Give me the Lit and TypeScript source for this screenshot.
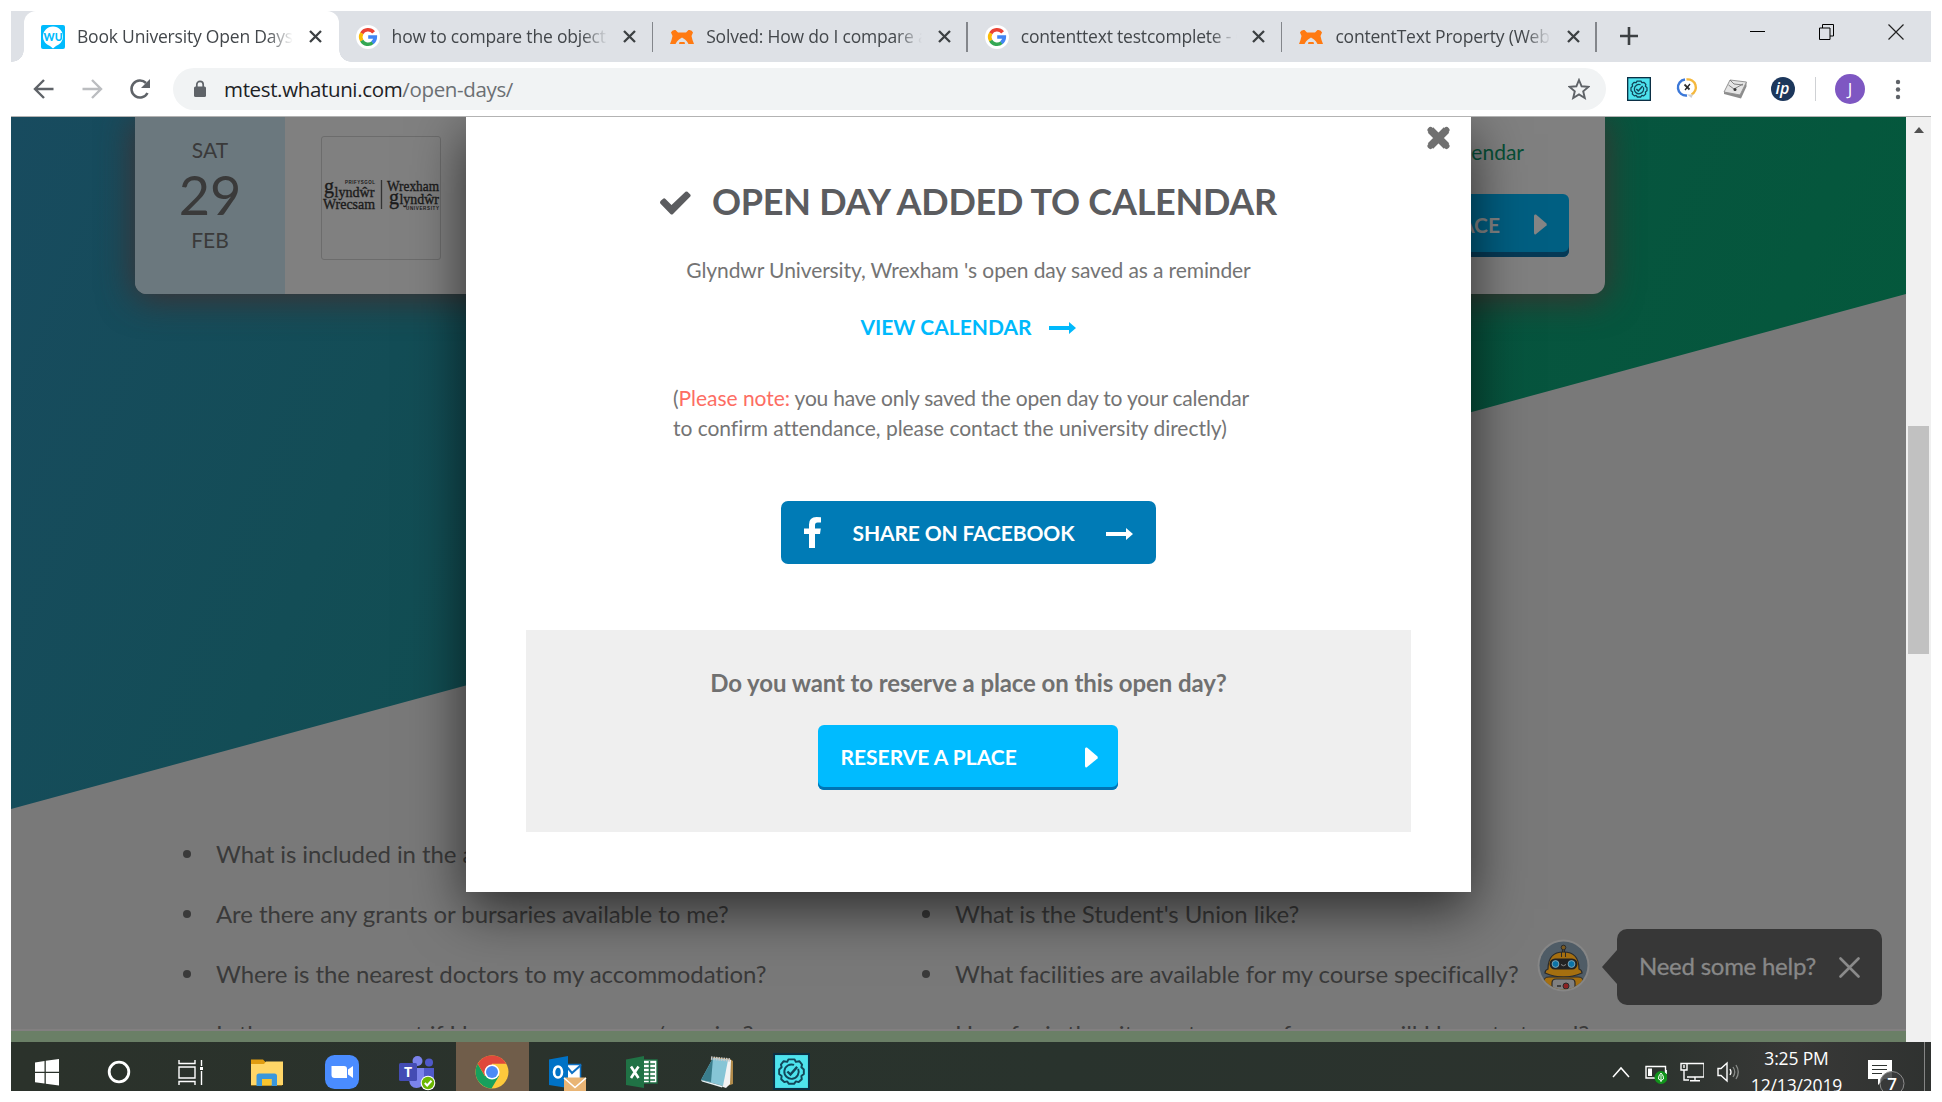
import { LitElement, html, css, svg, nothing } from "lit";
import { customElement, property } from "lit/decorators.js";
import { classMap } from "lit/directives/class-map.js";

const googleIcon = html`<svg width="24" height="24" viewBox="0 0 24 24">
  <circle cx="12" cy="12" r="12" fill="#fff" />
  <g fill="none" stroke-width="3.6">
    <path d="M17.6 7.4A7.3 7.3 0 0 0 5.7 8.4" stroke="#ea4335" />
    <path d="M5.8 8.2A7.3 7.3 0 0 0 5.8 15.8" stroke="#fbbc05" />
    <path d="M5.7 15.6A7.3 7.3 0 0 0 16.8 17.5" stroke="#34a853" />
    <path d="M16.4 17.8A7.3 7.3 0 0 0 19.3 12H12.2" stroke="#4285f4" />
  </g>
</svg>`;

const bearIcon = html`<svg width="24" height="24" viewBox="0 0 24 24">
  <path d="M1 7.500Q2 4.500 5.500 5L8 7.500H16L18.500 5Q22 4.500 23 7.500L21.500 11L22.500 15L24 19H18.500L17 16.500L15 14.500L12 12.500L9 14.500L7 16.500L5.500 19H0L1.500 15L2.500 11Z" fill="#ff7a12" />
  <path d="M9.500 17H14.500L15 19H9Z" fill="#ff7a12" />
</svg>`;

const whatuniIcon = html`<svg width="24" height="24" viewBox="0 0 24 24">
  <rect width="24" height="24" rx="2" fill="#00bbfd" />
  <path d="M12 1.500C17.800 1.500 22 6 22 11.500C22 16 19 19.500 15 21L12 23.500L9 21C5 19.500 2 16 2 11.500C2 6 6.200 1.500 12 1.500Z" fill="#fff" />
  <text x="12" y="15.700" text-anchor="middle" font-family="Lato, sans-serif" font-weight="900" font-size="10.500" fill="#00bbfd">WU</text>
</svg>`;

const gearBadge = (size: number) => html`<svg width=${size} height=${size} viewBox="0 0 36 36">
  <rect x="1" y="1" width="34" height="34" fill="#4ee3ee" stroke="#0b2f45" stroke-width="2" />
  <g fill="none" stroke="#12465a" stroke-width="1.900">
    <path d="M15 6.200H21L22.200 8.600L25.600 8L28.300 11.200L27.600 13.800L30 16V20.500L27.600 22.400L28 25.500L25 28.300L22.300 27.600L20.500 30H15.500L13.700 27.600L11 28.300L8 25.500L8.400 22.400L6 20.500V16L8.400 13.800L7.700 11.200L10.400 8L13.800 8.600Z" stroke-linejoin="round" />
    <path d="M24.500 15.500A7 7 0 1 1 20.500 11.600" />
    <path d="M14 18L17 21L23.500 13.500" stroke-width="2.300" />
  </g>
</svg>`;

const caret = html`<svg width="13" height="21" viewBox="0 0 13 21"><path d="M1 .5Q0 .5 0 2V19Q0 20.500 1.500 20.500L12.500 11.500Q13 10.500 12.500 9.500L2 .5Z" fill="currentColor" /></svg>`;

const arrow = html`<svg width="27" height="12" viewBox="0 0 27 12"><path d="M0 4H20V0L27 6L20 12V8H0Z" fill="currentColor" /></svg>`;

@customElement("browser-tab")
class BrowserTab extends LitElement {
  @property() label = "";
  @property({ type: Boolean }) active = false;
  @property({ attribute: false }) icon: unknown = nothing;

  static styles = css`
    :host { display: block; width: 314.600px; height: 51px; position: relative; }
    .tab { display: flex; align-items: center; height: 100%; box-sizing: border-box; padding-left: 17px; }
    .active { background: #fff; border-radius: 12px 12px 0 0; position: relative; }
    .active::before, .active::after {
      content: ""; position: absolute; bottom: 0; width: 12px; height: 12px;
    }
    .active::before { left: -12px; background: radial-gradient(circle at 0 0, transparent 11.500px, #fff 12px); }
    .active::after { right: -12px; background: radial-gradient(circle at 100% 0, transparent 11.500px, #fff 12px); }
    .icon { width: 24px; height: 24px; flex: none; }
    .icon svg { display: block; }
    .label {
      margin: 0 0 2px 12px; width: 216px; overflow: hidden; white-space: nowrap; flex: none;
      font: 17.500px/26px "Open Sans", "Noto Sans", sans-serif; letter-spacing: -0.200px; color: #43474b;
      -webkit-mask-image: linear-gradient(90deg, #000 88%, transparent 100%);
      mask-image: linear-gradient(90deg, #000 88%, transparent 100%);
    }
    .close { margin: 0 0 1px 15.500px; flex: none; }
    .rule { position: absolute; right: 0; top: 11px; width: 1.500px; height: 30px; background: #83868b; }
  `;

  render() {
    return html`<div class=${classMap({ tab: true, active: this.active })}>
        <span class="icon">${this.icon}</span>
        <span class="label">${this.label}</span>
        <svg class="close" width="13" height="13" viewBox="0 0 13 13"><path d="M1 1L12 12M12 1L1 12" stroke="#3c4043" stroke-width="2.300" /></svg>
      </div>
      ${this.active ? nothing : html`<i class="rule"></i>`}`;
  }
}

@customElement("browser-chrome")
class BrowserChrome extends LitElement {
  static styles = css`
    :host { display: block; background: #fff; }
    .strip { display: flex; height: 51px; background: #dee1e6; padding-left: 13px; }
    .plus { margin: 16px 0 0 23px; width: 18px; height: 18px; }
    .window { margin-left: auto; display: flex; padding: 13px 27px 0 0; gap: 54px; }
    .window svg { display: block; }
    .bar { display: flex; align-items: center; height: 54px; border-bottom: 1px solid #b3b3b3; box-sizing: content-box; }
    .nav { display: flex; gap: 24px; padding-left: 21px; width: 141px; }
    .omni {
      display: flex; align-items: center; width: 1433px; height: 42px; border-radius: 21px;
      background: #f1f3f4; box-sizing: border-box; padding: 0 16px 0 20px;
    }
    .url { font: 20.500px/30px "Open Sans", "Noto Sans", sans-serif; color: #202124; margin-left: 17px; flex: 1; letter-spacing: -0.350px; }
    .path { color: #6b6f73; }
    .ext { display: flex; align-items: center; gap: 24px; margin-left: 21px; }
    .ext svg { display: block; }
    .sep { width: 1px; height: 24px; background: #cfd1d4; margin-left: 20px; }
    .avatar {
      width: 30px; height: 30px; border-radius: 50%; background: #7e57c2; color: #fff; margin-left: 19px;
      font: 17px/30px "Open Sans", sans-serif; text-align: center;
    }
    .menu { margin-left: 30px; }
  `;

  render() {
    return html`
      <div class="strip">
        <browser-tab active label="Book University Open Days" .icon=${whatuniIcon}></browser-tab>
        <browser-tab label="how to compare the object" .icon=${googleIcon}></browser-tab>
        <browser-tab label="Solved: How do I compare a" .icon=${bearIcon}></browser-tab>
        <browser-tab label="contenttext testcomplete - G" .icon=${googleIcon}></browser-tab>
        <browser-tab label="contentText Property (Web O" .icon=${bearIcon}></browser-tab>
        <svg class="plus" viewBox="0 0 18 18"><path d="M9 0V18M0 9H18" stroke="#3c4043" stroke-width="2.600" /></svg>
        <div class="window">
          <svg width="15" height="16" viewBox="0 0 15 16"><path d="M0 7.500H15" stroke="#000" /></svg>
          <svg width="15" height="16" viewBox="0 0 15 16"><path d="M.5 4H11V15.500H.5ZM3.500 4V.5H14.500V12H11" fill="none" stroke="#000" /></svg>
          <svg width="16" height="16" viewBox="0 0 16 16"><path d="M.5 .5L15.500 15.500M15.500 .5L.5 15.500" stroke="#222" stroke-width="1.200" /></svg>
        </div>
      </div>
      <div class="bar">
        <div class="nav">
          <svg width="24" height="24" viewBox="0 0 24 24"><path d="M21.500 12H3.500M12 3L3 12L12 21" fill="none" stroke="#5f6368" stroke-width="2.400" /></svg>
          <svg width="24" height="24" viewBox="0 0 24 24"><path d="M2.500 12H20.500M12 3L21 12L12 21" fill="none" stroke="#bbbdc0" stroke-width="2.400" /></svg>
          <svg width="24" height="24" viewBox="0 0 24 24"><path d="M19.500 16A8.500 8.500 0 1 1 18 6" fill="none" stroke="#5f6368" stroke-width="2.500" /><path d="M22 2V11H13Z" fill="#5f6368" /></svg>
        </div>
        <div class="omni">
          <svg width="14" height="18" viewBox="0 0 14 18"><rect x="1" y="6.500" width="12" height="10.500" rx="1.500" fill="#5f6368" /><path d="M3.800 7V4.500A3.200 3.200 0 0 1 10.200 4.500V7" fill="none" stroke="#5f6368" stroke-width="1.700" /></svg>
          <span class="url">mtest.whatuni.com<span class="path">/open-days/</span></span>
          <svg width="22" height="22" viewBox="0 0 22 22"><path d="M11 2L13.600 8.300L20.400 8.900L15.200 13.300L16.800 20L11 16.400L5.200 20L6.800 13.300L1.600 8.900L8.400 8.300Z" fill="none" stroke="#5f6368" stroke-width="1.900" /></svg>
        </div>
        <div class="ext">
          ${gearBadge(24)}
          <svg width="24" height="24" viewBox="0 0 24 24" fill="none">
            <path d="M10 2.500A8 8 0 0 0 12 18.500" stroke="#3c78d8" stroke-width="2.400" />
            <path d="M11.500 2.500A8 8 0 0 1 16.500 17.500" stroke="#f5b83d" stroke-width="2.400" />
            <path d="M12 17.500H18L16.500 21Z" fill="#cfcfcf" />
            <path d="M9.500 7.500L14.500 12.500" stroke="#333" stroke-width="1.800" />
            <path d="M15 7L10 13" stroke="#222" stroke-width="1.300" />
          </svg>
          <svg width="24" height="24" viewBox="0 0 24 24">
            <path d="M7 3L23.500 5L17 18L1 15Z" fill="#e4e4e4" stroke="#7d7d7d" stroke-width=".8" />
            <path d="M17 18L23.500 5V9.500L18 21.500L1 17V15Z" fill="#8d8d8d" />
            <path d="M5.500 8L11 12L20 7M7 3L11 7L20 8" fill="none" stroke="#777" stroke-width=".9" />
            <circle cx="12" cy="12.500" r="1.500" fill="#333" />
          </svg>
          <svg width="24" height="24" viewBox="0 0 24 24">
            <circle cx="12" cy="12" r="12" fill="#1c375c" />
            <text x="11.500" y="16.500" text-anchor="middle" font-family="Open Sans, sans-serif" font-weight="600" font-style="italic" font-size="16" fill="#fff">ip</text>
          </svg>
        </div>
        <i class="sep"></i>
        <span class="avatar">J</span>
        <svg class="menu" width="6" height="21" viewBox="0 0 6 21" fill="#5f6368"><circle cx="3" cy="3" r="2.200" /><circle cx="3" cy="10.500" r="2.200" /><circle cx="3" cy="18" r="2.200" /></svg>
      </div>`;
  }
}

@customElement("saved-dialog")
class SavedDialog extends LitElement {
  static styles = css`
    :host { display: block; font-family: Lato, "Open Sans", sans-serif; color: #747474; }
    .dialog {
      position: relative; box-sizing: border-box; width: 1005px; height: 775px; background: #fff;
      padding: 62px 60px 60px; display: flex; flex-direction: column; align-items: center;
      box-shadow: 0 17px 52px rgba(0, 0, 0, 0.640);
    }
    .dismiss { position: absolute; right: 20px; top: 9px; }
    .title {
      display: flex; align-items: center; gap: 21px; margin: 0; font-size: 36px; line-height: 44px;
      font-weight: 700; color: #5b5c5f; white-space: nowrap; letter-spacing: -0.250px;
    }
    .title svg { margin-top: 3px; }
    .saved { margin: 32px 0 0; font-size: 21px; line-height: 30px; white-space: nowrap; letter-spacing: -0.100px; }
    .view {
      display: flex; align-items: center; gap: 17px; margin-top: 27px; font-weight: 700; color: #00b9fc;
      font-size: 21px; line-height: 30px; white-space: nowrap; padding-right: 1px;
    }
    .view svg { margin-top: 2px; }
    .note { margin: 41px 0 0; width: 591px; font-size: 21px; line-height: 30px; white-space: nowrap; letter-spacing: -0.040px; }
    .tight { letter-spacing: -0.220px; }
    .warn { color: #fd6d63; }
    .share {
      display: flex; align-items: center; box-sizing: border-box; width: 375px; height: 63px; margin-top: 58px;
      border-radius: 7px; background: #007bb6; color: #fff; font-size: 21px; font-weight: 700; padding: 0 23px;
      white-space: nowrap;
    }
    .share span { margin-left: 31.500px; flex: 1; letter-spacing: -0.130px; }
    .share svg:last-child { margin-top: 2px; }
    .reserve {
      box-sizing: border-box; width: 885px; height: 202px; margin-top: 66px; background: #efefef;
      display: flex; flex-direction: column; align-items: center; padding-top: 37px;
    }
    .ask { margin: 0; font-size: 24px; line-height: 31px; font-weight: 700; color: #707070; white-space: nowrap; letter-spacing: -0.100px; }
    .book {
      display: flex; align-items: center; justify-content: space-between; box-sizing: border-box; width: 300px;
      height: 65px; margin: 27px 1px 0 0; border-radius: 6px; background: #00bbff; box-shadow: inset 0 -3px #0074b4;
      color: #fff; font-size: 21px; font-weight: 700; padding: 0 20px 3px 22.500px; white-space: nowrap;
    }
    .book svg { margin-top: 3px; }
  `;

  render() {
    return html`<section class="dialog" role="dialog">
      <svg class="dismiss" width="25" height="24" viewBox="0 0 25 24"><path d="M4.500 4L20.500 20M20.500 4L4.500 20" stroke="#707070" stroke-width="7.600" stroke-linecap="butt" /><path d="M4.500 4L20.500 20M20.500 4L4.500 20" stroke="#707070" stroke-width="6" stroke-linecap="round" /></svg>
      <h2 class="title">
        <svg width="31" height="24" viewBox="0 0 31 24"><path d="M0 11.500Q0 10.500 1 9.500L3.500 7.500Q4.500 7 5.500 8L11.500 14L25.500 .8Q26.500 0 27.500 .8L30.300 3.500Q31 4.500 30.300 5.500L13 23Q11.800 24.200 10.500 23L.8 13Q0 12.300 0 11.500Z" fill="currentColor" /></svg>
        OPEN DAY ADDED TO CALENDAR
      </h2>
      <p class="saved">Glyndwr University, Wrexham 's open day saved as a reminder</p>
      <div class="view">VIEW CALENDAR ${arrow}</div>
      <p class="note">(<span class="warn">Please note:</span><span class="tight"> you have only saved the open day to your calendar</span><br />to confirm attendance, please contact the university directly)</p>
      <div class="share">
        <svg width="17" height="31" viewBox="0 0 17 31"><path d="M17 .3V5.600H13.500Q11 5.600 11 8.300V11.500H16.800L16 17H11V31H5V17H0V11.500H5V7.500Q5 0 12.500 0Q15.500 0 17 .3Z" fill="#fff" /></svg>
        <span>SHARE ON FACEBOOK</span>${arrow}
      </div>
      <div class="reserve">
        <p class="ask">Do you want to reserve a place on this open day?</p>
        <div class="book">RESERVE A PLACE ${caret}</div>
      </div>
    </section>`;
  }
}

const LEFT = [
  "What is included in the accommodation cost?",
  "Are there any grants or bursaries available to me?",
  "Where is the nearest doctors to my accommodation?",
  "Is there any support if I have any concerns/worries?",
];
const RIGHT = [
  "What societies are there?",
  "What is the Student's Union like?",
  "What facilities are available for my course specifically?",
  "How far is the city centre away from me, will I have to travel?",
];

@customElement("open-days-page")
class OpenDaysPage extends LitElement {
  static styles = css`
    :host { display: flex; height: 925px; font-family: Lato, "Open Sans", sans-serif; }
    .page { position: relative; width: 1895px; height: 925px; overflow: hidden; background: #797979; color: #3a3a3a; }
    .hero {
      box-sizing: border-box; height: 692px; padding-left: 124px;
      background: linear-gradient(112deg, #184b5f 0%, #134d56 22%, #104f50 38%, #07543f 70%, #035a3b 100%);
      clip-path: polygon(0 0, 100% 0, 100% 177px, 0 100%);
    }
    .card {
      display: flex; width: 1470px; height: 177px; border-radius: 0 0 12px 12px; background: #808080;
      box-shadow: 0 4px 34px 2px rgba(70, 45, 45, 0.850);
    }
    .date {
      width: 150px; background: #6b787e; border-radius: 0 0 0 12px; display: flex; flex-direction: column;
      align-items: center; font-size: 21px; padding-top: 20px; box-sizing: border-box;
    }
    .date span { line-height: 26px; }
    .date .day { font-size: 54px; line-height: 64px; }
    .logo {
      display: flex; justify-content: center; box-sizing: border-box; width: 120px; height: 124px; padding-top: 42px;
      margin: 19px 0 0 36px; border: 1.500px solid #6c6c6c; border-radius: 3px;
    }
    .logo svg { flex: none; overflow: visible; }
    .actions { margin-left: auto; margin-right: 36px; width: 300px; display: flex; flex-direction: column; align-items: flex-end; }
    .saved { color: #064f36; font-size: 21px; line-height: 30px; margin: 20px 45px 0 0; white-space: nowrap; }
    .book {
      display: flex; align-items: center; justify-content: space-between; width: 300px; height: 63px; margin-top: 27px;
      box-sizing: border-box; padding: 0 22px 3px 22px; border-radius: 6px; background: #005f82;
      box-shadow: inset 0 -5px #063a56; color: #858585; font-weight: 700; font-size: 21px;
    }
    .book span { margin-right: 34px; margin-left: auto; }
    .lists { display: grid; grid-template-columns: 739px 1fr; padding: 14px 0 0 205px; }
    ul { list-style: none; margin: 0; padding: 0; }
    li { display: flex; align-items: center; height: 60px; font-size: 24px; white-space: nowrap; letter-spacing: -0.080px; }
    li::before { content: ""; width: 8px; height: 8px; border-radius: 50%; background: #3a3a3a; margin: 2px 25px 0 -33px; }
    .foot { position: absolute; left: 0; right: 0; bottom: 0; height: 11px; background: #6a7f66; border-top: 2px solid #827f80; }
    .modal { position: absolute; left: 455px; top: 0; }
    .help { position: absolute; left: 1525px; top: 812px; display: flex; align-items: center; }
    .robot { display: block; margin: 0 0 4px 1px; }
    .bubble {
      position: relative; box-sizing: border-box; width: 265px; height: 76px; margin-left: 27px; border-radius: 10px;
      background: #373737; color: #888; font-size: 24px; display: flex; align-items: center;
      justify-content: space-between; padding: 0 22px 0 22px; white-space: nowrap; letter-spacing: -0.250px;
    }
    .bubble span { margin-bottom: 4px; -webkit-text-stroke: 0.300px #888; }
    .bubble::before {
      content: ""; position: absolute; left: -15px; top: 21px; width: 15px; height: 34px; background: #373737;
      clip-path: polygon(100% 0, 0 50%, 100% 100%);
    }
    .scroll { width: 25px; background: #f0f0f0; box-sizing: border-box; padding: 10px 2px 0; display: flex; flex-direction: column; }
    .up { width: 0; height: 0; border: 5.500px solid transparent; border-top: 0; border-bottom: 6px solid #505050; align-self: center; }
    .thumb { height: 228px; margin-top: 293px; background: #c1c1c1; }
  `;

  render() {
    return html`<div class="page">
        <div class="hero">
          <div class="card">
            <div class="date"><span>SAT</span><span class="day">29</span><span>FEB</span></div>
            <div class="logo">
              <svg width="117" height="32" viewBox="0 0 117 32" font-family="Liberation Serif, serif" fill="#1b1b1b" stroke="#1b1b1b" stroke-width=".35">
                <text x="1" y="14" font-size="20" textLength="10" lengthAdjust="spacingAndGlyphs">g</text>
                <text x="11.500" y="17.500" font-size="14.500" textLength="40" lengthAdjust="spacingAndGlyphs">lyndŵr</text>
                <text x="0" y="30" font-size="15" textLength="52" lengthAdjust="spacingAndGlyphs">Wrecsam</text>
                <text x="22" y="5" font-size="4.500" font-weight="700" font-family="Liberation Sans, sans-serif" stroke="none" textLength="30">PRIFYSGOL</text>
                <path d="M58.500 1V30" stroke="#333" stroke-width="1.300" />
                <text x="64" y="12" font-size="15" textLength="52" lengthAdjust="spacingAndGlyphs">Wrexham</text>
                <text x="66" y="24.500" font-size="20" textLength="10" lengthAdjust="spacingAndGlyphs">g</text>
                <text x="76.500" y="24.500" font-size="14.500" textLength="39.500" lengthAdjust="spacingAndGlyphs">lyndŵr</text>
                <text x="83" y="31" font-size="4.500" font-weight="700" font-family="Liberation Sans, sans-serif" stroke="none" textLength="33">UNIVERSITY</text>
              </svg>
            </div>
            <div class="actions">
              <p class="saved">Added to calendar</p>
              <div class="book"><span>RESERVE A PLACE</span>${caret}</div>
            </div>
          </div>
        </div>
        <div class="lists">
          <ul>${LEFT.map((t) => html`<li>${t}</li>`)}</ul>
          <ul>${RIGHT.map((t) => html`<li>${t}</li>`)}</ul>
        </div>
        <div class="foot"></div>
        <div class="modal"><saved-dialog></saved-dialog></div>
        <div class="help">
          <svg class="robot" width="53" height="53" viewBox="0 0 53 53">
            <defs><clipPath id="face"><circle cx="26.500" cy="26.500" r="24" /></clipPath></defs>
            <circle cx="26.500" cy="26.500" r="26" fill="#868686" />
            <circle cx="26.500" cy="26.500" r="24" fill="#4f5c66" />
            <g clip-path="url(#face)">
              <path d="M25.500 9V16M27.500 9V16" stroke="#2b2b2b" stroke-width="1.200" />
              <circle cx="26.500" cy="8.500" r="2.300" fill="#7a5a20" stroke="#2b2b2b" />
              <path d="M8 34Q8 31 11 30Q11 13 26.500 13Q42 13 42 30Q45 31 45 34Q36 38 26.500 38Q17 38 8 34Z" fill="#a56f10" stroke="#2b2b2b" stroke-width="1.200" />
              <path d="M24.500 13V18M28.500 13V18" stroke="#2b2b2b" />
              <rect x="12.500" y="19.500" width="28" height="11" rx="5.500" fill="#222" />
              <circle cx="18.500" cy="25" r="3.400" fill="#0c74a8" stroke="#7aa4b8" />
              <circle cx="34.500" cy="25" r="3.400" fill="#0c74a8" stroke="#7aa4b8" />
              <path d="M24 25.500Q26.500 28 29 25.500" fill="none" stroke="#8a8a8a" />
              <path d="M7 53V42Q7 38 12 38H41Q46 38 46 42V53Z" fill="#a56f10" stroke="#2b2b2b" />
              <path d="M15 53V44Q15 40 19 40H34Q38 40 38 44V53Z" fill="#808080" stroke="#2b2b2b" stroke-width="1.200" />
              <path d="M20 47H24" stroke="#2b2b2b" stroke-width="1.300" />
              <circle cx="29" cy="47" r="3" fill="#8c2222" stroke="#2b2b2b" />
            </g>
          </svg>
          <div class="bubble"><span>Need some help?</span>
            <svg width="21" height="21" viewBox="0 0 21 21"><path d="M1.500 1.500L19.500 19.500M19.500 1.500L1.500 19.500" stroke="#8a8a8a" stroke-width="2.600" stroke-linecap="round" /></svg>
          </div>
        </div>
      </div>
      <div class="scroll"><i class="up"></i><i class="thumb"></i></div>`;
  }
}

const taskIcons = [
  svg`<g fill="#fff"><path d="M6 9.500L15.500 8V18.800H6ZM16.800 7.800L30 6V18.800H16.800ZM6 20H15.500V30.600L6 29.200ZM16.800 20H30V32.500L16.800 30.800Z"/></g>`,
  svg`<circle cx="18" cy="19" r="9.800" fill="none" stroke="#fff" stroke-width="2.800"/>`,
  svg`<g fill="none" stroke="#fff" stroke-width="1.400"><path d="M6 7V10.500H22V7M6 14H22V25H6ZM6 32V28.500H22V32M28.500 7V13M28.500 18V32"/><path d="M27 14H30V17H27Z" fill="#fff" stroke="none"/></g>`,
  svg`<path d="M2 6.500H14L16.500 9H33V32.500H2Z" fill="#e09c10"/><path d="M2 11H15L17 8.500H34V32H2Z" fill="#ffd667"/><path d="M7.500 33V23Q7.500 20.500 10 20.500H25.500Q28 20.500 28 23V33H22.500V26H13V33Z" fill="#3a97dc"/><path d="M13 26H22.500V32.500H13Z" fill="#f8c42e"/>`,
  svg`<rect x="1" y="2" width="34" height="34" rx="9.500" fill="#4a8cff"/><path d="M7.500 13H20Q23 13 23 16V25H10.500Q7.500 25 7.500 22ZM24 16.500L29 13V25L24 21.500Z" fill="#fff"/>`,
  svg`<circle cx="18.500" cy="8" r="5" fill="#7b83eb"/><circle cx="30" cy="9.500" r="4" fill="#5059c9"/><path d="M24 15H35V25Q34 31 28 30H24Z" fill="#5059c9"/><path d="M10 15H25V27Q24 35 17.500 35Q11 35 10 27Z" fill="#7b83eb"/><rect x="0" y="10" width="18" height="18" rx="1.500" fill="#444cb4"/><text x="9" y="24" text-anchor="middle" font-family="Open Sans, sans-serif" font-weight="700" font-size="14" fill="#fff">T</text><circle cx="29" cy="30" r="7.300" fill="#fff"/><circle cx="29" cy="30" r="6.200" fill="#6bb700"/><path d="M25.800 30L28.200 32.500L32.500 27.800" fill="none" stroke="#fff" stroke-width="2"/>`,
  svg`<circle cx="18" cy="19" r="16.500" fill="#fdc93c"/><path d="M3.700 10.800A16.500 16.500 0 0 0 17.500 35.500L25 23L18 19L10.800 23Z" fill="#17a05d"/><path d="M3.700 10.800L11 23L18 19L18 10.800L32.300 10.700A16.500 16.500 0 0 0 3.700 10.800Z" fill="#e0483b"/><circle cx="18" cy="19" r="7.600" fill="#fff"/><circle cx="18" cy="19" r="6" fill="#4c8bf5"/>`,
  svg`<path d="M17 11H32V27H17Z" fill="#fff"/><path d="M18 11.500H31.500V26H18Z" fill="none" stroke="#0f71c4" stroke-width="1.500"/><path d="M18 14L23 20L32 12" fill="none" stroke="#0f71c4" stroke-width="2"/><path d="M0 6.500L19 3V35L0 32Z" fill="#0072c6"/><ellipse cx="9" cy="19" rx="4" ry="5.500" fill="none" stroke="#fff" stroke-width="2.600"/><path d="M15 24.500H37V39H15Z" fill="#e9b575"/><path d="M15 25L26 34.500L37 25" fill="none" stroke="#fff" stroke-width="1.600"/>`,
  svg`<path d="M18 7H33V30H18Z" fill="#fff" stroke="#207245" stroke-width="1.300"/><path d="M19 11H31M19 15H31M19 19H31M19 23H31M19 27H31M25.500 8V30" stroke="#207245" stroke-width="1.500"/><path d="M2 6.500L20 3V35L2 32Z" fill="#207245"/><path d="M7 13.500L14.500 25M14.500 13.500L7 25" stroke="#fff" stroke-width="2.600"/>`,
  svg`<path d="M14 4L31 6L34 8V31L28 33Z" fill="#b08a4a"/><path d="M14 5L32 7L31 31L27 35L24 34Z" fill="#f3f3f3"/><path d="M14 5L29 7L24 33L2 27Z" fill="#86c5d6"/><path d="M14 5L12 29L2 27Z" fill="#3a7d8c"/><path d="M12 5L31 7" stroke="#c8c8c8" stroke-width="3.500" stroke-dasharray="1.500 1"/><path d="M2 27L24 33L23 34.500L3 28.500Z" fill="#e8f4f7"/>`,
];

@customElement("task-bar")
class TaskBar extends LitElement {
  static styles = css`
    :host {
      display: flex; height: 49px; overflow: hidden; color: #fff;
      background: linear-gradient(90deg, #2b322b 0%, #29332d 55%, #2c332e 85%, #383837 93%, #2f3230 100%);
    }
    .cell { width: 74.850px; height: 49px; display: flex; justify-content: center; padding-top: 11px; box-sizing: border-box; flex: none; }
    .narrow { width: 72px; }
    .third { margin-right: 3px; }
    .on { background: #705d4a; width: 73px; margin: 0 1px; }
    .cell svg { display: block; overflow: visible; }
    .tray { display: flex; margin-left: auto; }
    .tray svg { display: block; flex: none; }
    .icons { display: flex; gap: 13px; padding-top: 19px; }
    .clock { width: 112px; margin-left: 0; text-align: center; font: 17.500px/27px "Open Sans", "Noto Sans", sans-serif; padding-top: 3px; letter-spacing: -0.150px; }
    .note { margin-left: 14px; margin-top: 17px; }
    .edge { width: 1.500px; height: 49px; background: #858585; margin: 0 6px 0 19px; }
  `;

  render() {
    return html`
      ${taskIcons.map(
        (icon, i) => html`<div class=${classMap({ cell: true, narrow: i < 3, third: i === 2, on: i === 6 })}>
          <svg width="36" height="38" viewBox="0 0 36 38">${icon}</svg>
        </div>`
      )}
      <div class="cell">${gearBadge(37)}</div>
      <div class="tray">
        <div class="icons">
          <svg width="18" height="24" viewBox="0 0 18 24"><path d="M1 16L9 7L17 16" fill="none" stroke="#fff" stroke-width="1.500" /></svg>
          <svg width="24" height="24" viewBox="0 0 24 24"><path d="M3 5.500H22.500V17H3ZM24 9V13" fill="none" stroke="#fff" stroke-width="1.400" /><path d="M5 7.500H9V15H5Z" fill="#fff" /><circle cx="18" cy="16.500" r="6.500" fill="#11941b" /><path d="M18 12Q21 15 20.500 18L18 19.500L15.500 18Q15 15 18 12ZM18 14V21" fill="none" stroke="#fff" /></svg>
          <svg width="24" height="24" viewBox="0 0 24 24"><path d="M7 2.500H24V16H7M1 2.500H7V9H1ZM4 4V7M4 9V19H9M15 16V19.500M10 19.800H20" fill="none" stroke="#fff" stroke-width="1.400" /></svg>
          <svg width="24" height="24" viewBox="0 0 24 24" fill="none"><path d="M1 7.500H4L10 2V20L4 14.500H1Z" stroke="#fff" stroke-width="1.400" /><path d="M13 8Q15 11 13 14" stroke="#fff" stroke-width="1.300" /><path d="M16 6Q19.500 11 16 16M19 4Q23.500 11 19 18" stroke="#8a8d8a" stroke-width="1.300" /></svg>
        </div>
        <div class="clock">3:25 PM<br />12/13/2019</div>
        <svg class="note" width="38" height="36" viewBox="0 0 38 36">
          <path d="M1 1H25V20H17L11 26V20H1Z" fill="#fff" />
          <path d="M5 6.500H20M5 10.500H20M5 14.500H15" stroke="#2f3331" stroke-width="1.200" />
          <circle cx="25" cy="24.500" r="12" fill="#3a3b3b" fill-opacity=".85" stroke="#8b8b8b" />
          <text x="25" y="31" text-anchor="middle" font-family="Open Sans, sans-serif" font-weight="600" font-size="17" fill="#fff">7</text>
        </svg>
        <i class="edge"></i>
      </div>`;
  }
}

@customElement("app-root")
class AppRoot extends LitElement {
  static styles = css`
    :host { display: block; box-sizing: border-box; width: 1942px; height: 1102px; padding: 11px; background: #fff; overflow: hidden; }
    .screen { width: 1920px; height: 1080px; overflow: hidden; display: flex; flex-direction: column; }
  `;

  render() {
    return html`<div class="screen">
      <browser-chrome></browser-chrome>
      <open-days-page></open-days-page>
      <task-bar></task-bar>
    </div>`;
  }
}
